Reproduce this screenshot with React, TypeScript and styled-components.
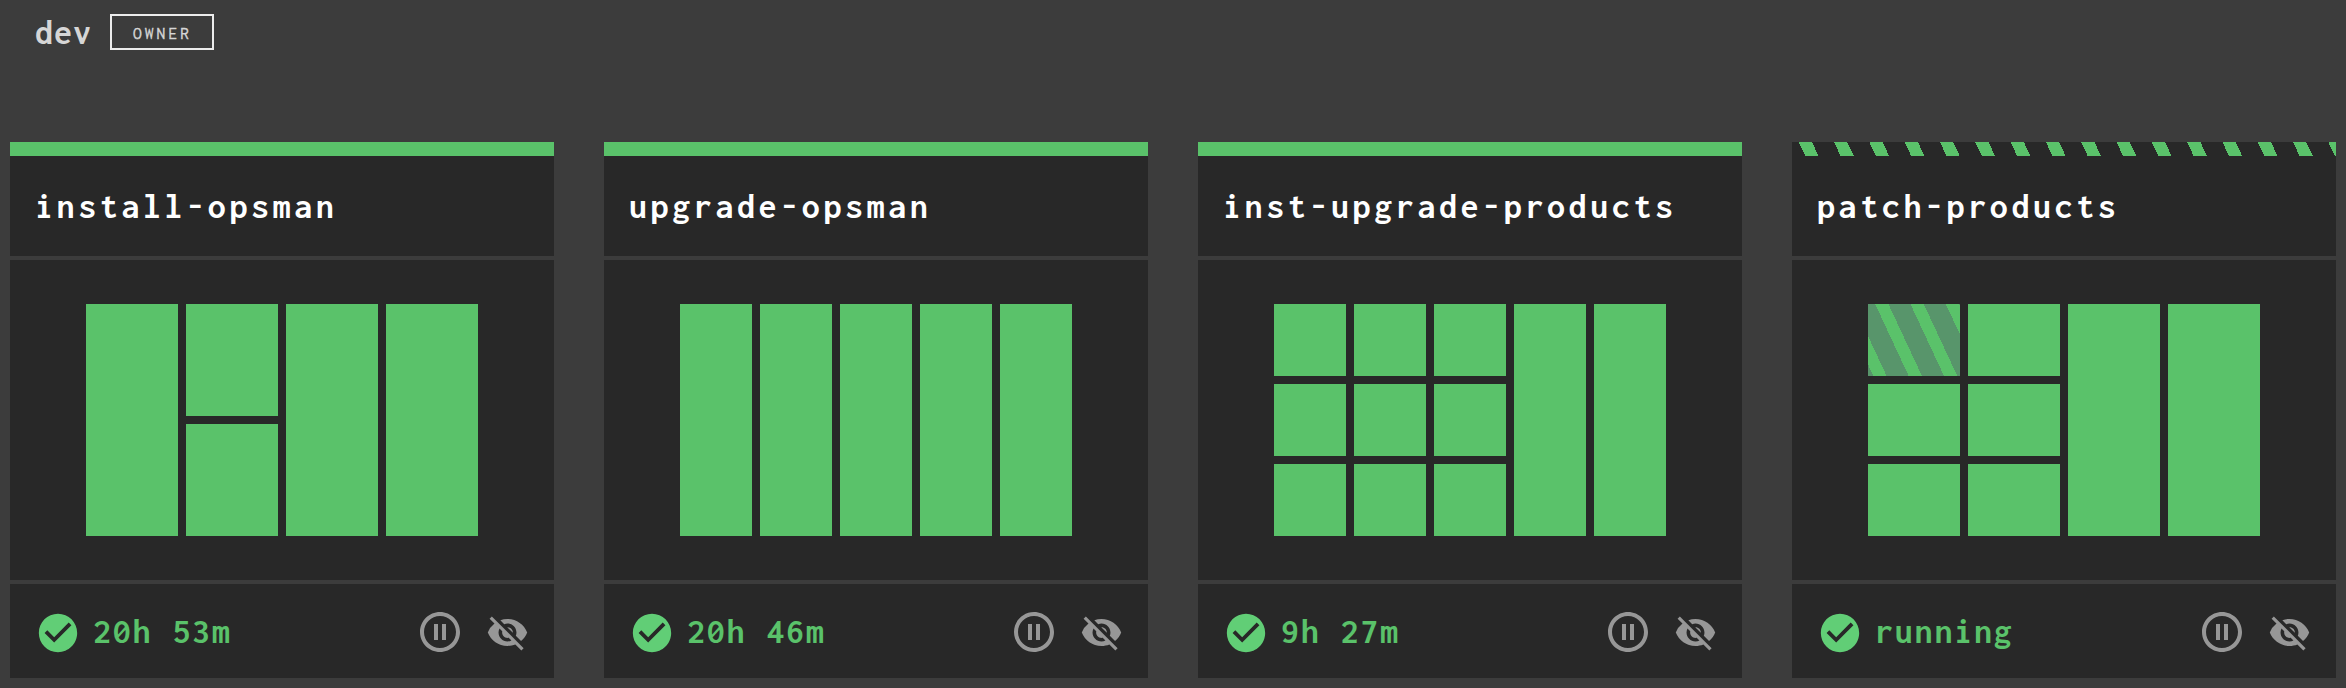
import React from 'react';
import styled, { createGlobalStyle } from 'styled-components';
import { MdCheckCircle, MdPauseCircleOutline, MdVisibilityOff } from 'react-icons/md';

const green = '#5ac26a';
const panel = '#282828';

const GlobalStyle = createGlobalStyle`
  * { box-sizing: border-box; }
  body {
    margin: 0;
    background: #3c3c3c;
    font-family: Inconsolata, "Noto Sans Mono CJK JP", "Liberation Mono", monospace;
    font-weight: 700;
  }
`;

const Page = styled.main`
  height: 688px;
  padding: 0 10px 10px;
  overflow: hidden;
`;

const GroupHeader = styled.header`
  display: flex;
  align-items: flex-start;
  height: 142px;
  padding: 14px 0 0 25px;
`;

const GroupName = styled.h1`
  width: 75px;
  margin: 0;
  color: #d6d6d6;
  font-size: 36px;
  font-weight: 700;
  line-height: 36px;
  letter-spacing: 1px;
`;

const RoleTag = styled.span`
  display: flex;
  align-items: center;
  justify-content: center;
  width: 104px;
  height: 36px;
  border: 2px solid #ececec;
  color: #d6d6d6;
  font-size: 17.5px;
  font-weight: 400;
  line-height: 18px;
  letter-spacing: 3.1px;
  padding: 1px 0 0 1px;
  -webkit-text-stroke: 0.3px #d6d6d6;
`;

const CardList = styled.section`
  display: grid;
  grid-template-columns: repeat(4, 544px);
  column-gap: 50px;
`;

const Card = styled.article`
  display: flex;
  flex-direction: column;
`;

const Banner = styled.div<{ $running?: boolean }>`
  height: 14px;
  background: ${({ $running }) =>
    $running
      ? `repeating-linear-gradient(65deg, ${panel} 0, ${panel} 12px, ${green} 12px, ${green} 24px, ${panel} 24px, ${panel} 32px)`
      : green};
`;

const CardTitle = styled.h2`
  height: 100px;
  margin: 0;
  padding-left: 25px;
  background: ${panel};
  color: #fff;
  font-size: 36px;
  font-weight: 700;
  line-height: 100px;
  letter-spacing: 3.6px;
  white-space: nowrap;
`;

const Preview = styled.div`
  display: flex;
  gap: 8px;
  height: 320px;
  margin: 4px 0;
  padding: 44px 76px;
  background: ${panel};
`;

const Stage = styled.div`
  display: flex;
  flex: 1;
  flex-direction: column;
  gap: 8px;
`;

const Job = styled.div<{ $running?: boolean }>`
  flex: 1;
  background: ${({ $running }) =>
    $running
      ? `repeating-linear-gradient(65deg, #58956b 0, #58956b 4.9px, ${green} 4.9px, ${green} 16.9px, #58956b 16.9px, #58956b 32px)`
      : green};
`;

const CardFooter = styled.footer`
  display: flex;
  align-items: center;
  height: 94px;
  padding: 0 25px 0 25px;
  background: ${panel};
  color: #979797;
`;

const StatusIcon = styled(MdCheckCircle)`
  width: 46px;
  height: 46px;
  margin-top: 4px;
  color: #61ce76;
`;

const StatusText = styled.span`
  flex: 1;
  margin-left: 12px;
  color: ${green};
  font-size: 36px;
  line-height: 94px;
  letter-spacing: 1.8px;
  white-space: pre;
`;

const PauseIcon = styled(MdPauseCircleOutline)`
  width: 48px;
  height: 48px;
  margin: 2px 22px 0 0;
`;

const HiddenIcon = styled(MdVisibilityOff)`
  width: 43px;
  height: 43px;
  margin-top: 2px;
`;

interface Pipeline {
  name: string;
  status: string;
  running?: boolean;
  stages: number[];
}

const pipelines: Pipeline[] = [
  { name: 'install-opsman', status: '20h 53m', stages: [1, 2, 1, 1] },
  { name: 'upgrade-opsman', status: '20h 46m', stages: [1, 1, 1, 1, 1] },
  { name: 'inst-upgrade-products', status: '9h 27m', stages: [3, 3, 3, 1, 1] },
  { name: 'patch-products', status: 'running', running: true, stages: [3, 3, 1, 1] },
];

function PipelineCard({ name, status, running, stages }: Pipeline) {
  return (
    <Card>
      <Banner $running={running} />
      <CardTitle>{name}</CardTitle>
      <Preview>
        {stages.map((jobs, s) => (
          <Stage key={s}>
            {Array.from({ length: jobs }, (_, j) => (
              <Job key={j} $running={running && s === 0 && j === 0} />
            ))}
          </Stage>
        ))}
      </Preview>
      <CardFooter>
        <StatusIcon />
        <StatusText>{status}</StatusText>
        <PauseIcon />
        <HiddenIcon />
      </CardFooter>
    </Card>
  );
}

export default function App() {
  return (
    <>
      <GlobalStyle />
      <Page>
        <GroupHeader>
          <GroupName>dev</GroupName>
          <RoleTag>OWNER</RoleTag>
        </GroupHeader>
        <CardList>
          {pipelines.map((p) => (
            <PipelineCard key={p.name} {...p} />
          ))}
        </CardList>
      </Page>
    </>
  );
}
